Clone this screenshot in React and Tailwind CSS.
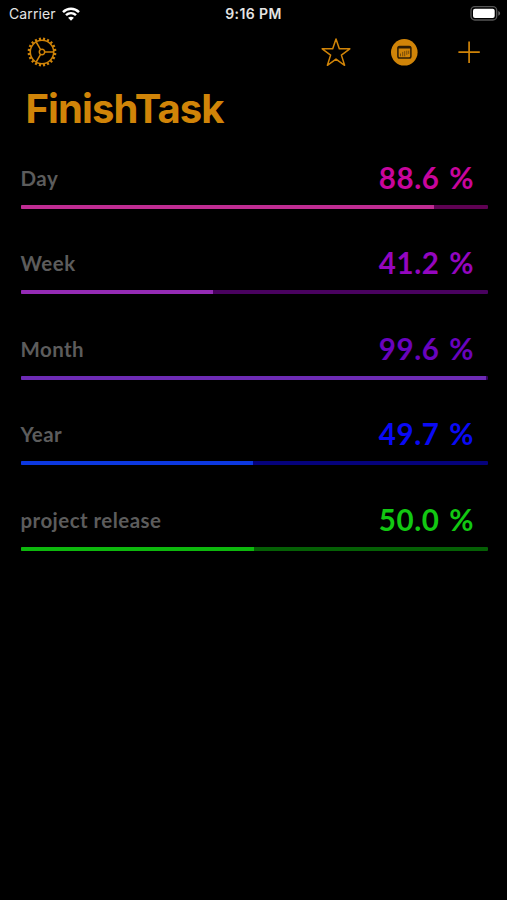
const rows = [
  { label: 'Day', value: '88.6', pct: 88.5, text: 'text-[#c8059c]', fill: 'bg-[#bf2c92]', track: 'bg-[#5f0253]', ls: 'tracking-[0.5px]' },
  { label: 'Week', value: '41.2', pct: 41.2, text: 'text-[#9406bf]', fill: 'bg-[#942bb5]', track: 'bg-[#49025f]', ls: 'tracking-[0.5px]' },
  { label: 'Month', value: '99.6', pct: 99.6, text: 'text-[#6903bd]', fill: 'bg-[#6d2bb5]', track: 'bg-[#35025f]', ls: 'tracking-[0.4px]' },
  { label: 'Year', value: '49.7', pct: 49.8, text: 'text-[#0a0af5]', fill: 'bg-[#0c38e0]', track: 'bg-[#05027c]', ls: 'tracking-[0.4px]' },
  { label: 'project release', value: '50.0', pct: 50, text: 'text-[#12c812]', fill: 'bg-[#0db80d]', track: 'bg-[#056005]', ls: 'tracking-[0.45px]' },
];

const teeth = Array.from({ length: 20 }, (_, i) => i * 18);

function Gear() {
  return (
    <svg width="30" height="30" viewBox="-15 -15 30 30" fill="none" stroke="#d08408" strokeWidth="1.5">
      <circle r="11.7" />
      <circle r="2.7" />
      <path d="M2.8 0H11.5M-1.4 -2.4L-5.8 -10M-1.4 2.4L-5.8 10" />
      {teeth.map((a) => (
        <path key={a} d="M12 0H14.4" strokeWidth="2.1" transform={`rotate(${a + 9})`} />
      ))}
    </svg>
  );
}

function Star() {
  return (
    <svg width="30" height="30" viewBox="0 0 30 30" fill="none" stroke="#d08408" strokeWidth="1.5" strokeLinejoin="round">
      <path d="M15 1.9L18.3 11.8H28.8L20.4 18.1L23.6 28.3L15 22.1L6.4 28.3L9.6 18.1L1.2 11.8H11.7Z" />
    </svg>
  );
}

function CalendarBadge() {
  return (
    <svg width="28" height="28" viewBox="0 0 28 28" fill="none">
      <circle cx="14.3" cy="14.3" r="13.3" fill="#d08408" />
      <rect x="7.9" y="8.5" width="13" height="11.6" rx="1.8" stroke="#2c1c04" strokeWidth="1.5" />
      <path d="M7.9 9.5H20.9" stroke="#2c1c04" strokeWidth="2" />
      <path d="M10.5 15.5V18.3M12.7 13.9V18.3M14.7 13.1V18.3M16.8 12.7V16.8M18.7 12.7V15.9" stroke="#6b450a" strokeWidth="0.9" />
    </svg>
  );
}

export default function App() {
  return (
    <div className="h-[900px] w-[507px] overflow-hidden bg-black font-['Inter',sans-serif]">
      <header className="grid h-7 grid-cols-3 items-center pr-[6px] pl-[9px] text-[14px] leading-none text-[#e4e4e4]">
        <div className="flex items-center gap-[6px]">
          <span className="tracking-[0.1px]">Carrier</span>
          <svg width="18" height="14" viewBox="0 0 18 14" fill="none" stroke="#fff" strokeWidth="2.5">
            <path d="M1 5.1C5.6 .7 12.4 .7 17 5.1M4 8.2C6.9 5.5 11.1 5.5 14 8.2" />
            <path d="M9 13.7L6.1 10.7C7.8 9.3 10.2 9.3 11.9 10.7Z" fill="#fff" stroke="none" />
          </svg>
        </div>
        <span className="pr-[3px] text-center text-[14px] font-semibold tracking-[0.4px] whitespace-nowrap">9:16 PM</span>
        <svg className="justify-self-end" width="31" height="16" viewBox="0 0 31 16" fill="none">
          <rect x="1" y="0.7" width="25.7" height="13.3" rx="3.8" stroke="#565656" strokeWidth="1.3" />
          <rect x="3" y="2.7" width="21.7" height="9.3" rx="2" fill="#fff" />
          <path d="M28.3 5C30.7 6 30.7 8.8 28.3 9.8Z" fill="#666" />
        </svg>
      </header>
      <nav className="flex h-12 items-center justify-between pr-[26px] pl-[26.5px]">
        <Gear />
        <div className="flex items-center">
          <Star />
          <div className="ml-[39px]"><CalendarBadge /></div>
          <svg className="ml-[39px]" width="24" height="24" viewBox="0 0 24 24" stroke="#d08408" strokeWidth="1.7">
            <path d="M1.4 12.2H22.8M12.1 1.5V22.9" />
          </svg>
        </div>
      </nav>
      <h1 className="h-[67.5px] pt-[9px] pl-[25.5px] text-[40px] leading-[48px] font-bold tracking-[-0.9px] text-[#d08408]">FinishTask</h1>
      <main className="flex flex-col pr-[19.5px] pl-[20.5px] font-['Lato',sans-serif]">
        {rows.map((r) => (
          <section key={r.label} className="h-[85.5px] pt-[13px]">
            <div className="flex h-12 items-start justify-between pr-[14px]">
              <span className={`text-[20.5px] leading-[43px] font-bold text-[#5c5c5c] ${r.ls}`}>{r.label}</span>
              <span className={`flex text-[29.5px] leading-[41px] font-bold ${r.text}`}>
                <span className="w-[70.5px] tracking-[0.6px]">{r.value}</span>
                <span>%</span>
              </span>
            </div>
            <div className={`h-1 overflow-hidden rounded-[1px] ${r.track}`}>
              <div className={`h-full ${r.fill}`} style={{ width: `${r.pct}%` }} />
            </div>
          </section>
        ))}
      </main>
    </div>
  );
}
